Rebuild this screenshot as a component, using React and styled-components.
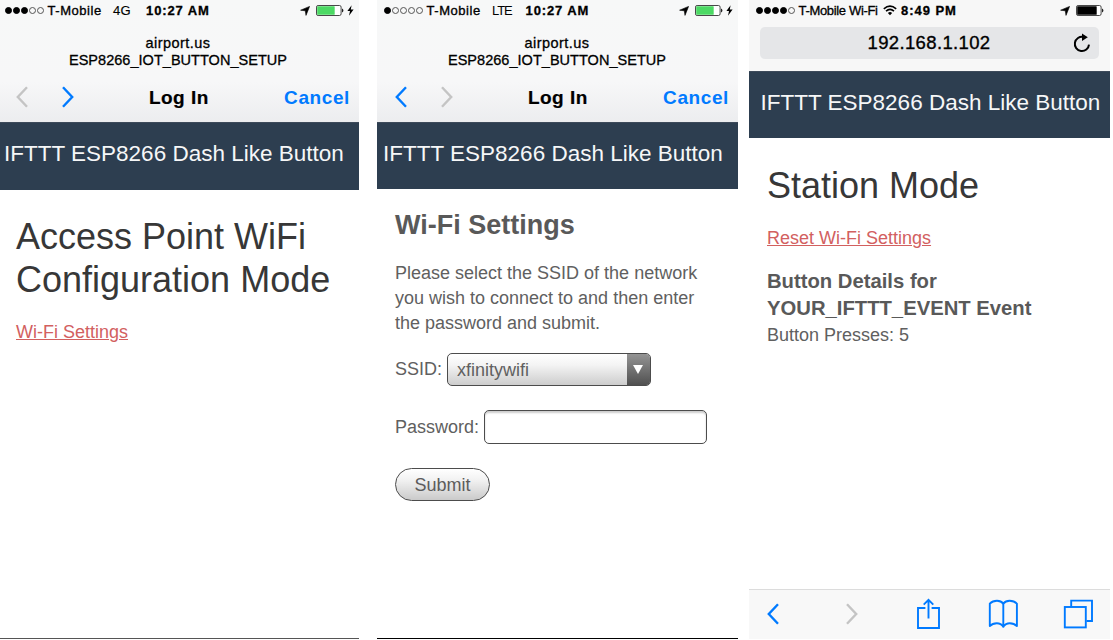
import React from "react";
import styled, { createGlobalStyle } from "styled-components";

const BLUE = "#007aff";
const GREY = "#c4c4c4";

const GlobalStyle = createGlobalStyle`
  * { box-sizing: border-box; }
  body { margin: 0; background: #fff; font-family: "Liberation Sans", Arial, sans-serif; overflow: hidden; }
  h1, h2, h3, p { margin: 0; }
  svg { display: block; flex: none; }
`;

const Board = styled.main`
  display: grid;
  grid-template-columns: 359px 361px 361px;
  column-gap: 18px;
  width: 1113px;
  height: 640px;
  padding-bottom: 1px;
  & > :last-child { margin-left: -7px; }
`;

const Phone = styled.section`
  display: flex;
  flex-direction: column;
  width: ${(p) => p.$width}px;
  height: 639px;
  background: #fff;
  border-bottom: ${(p) => (p.$edge ? `1px solid ${p.$edge}` : "none")};
`;

const Chrome = styled.header`
  height: ${(p) => p.$height}px;
  flex: none;
  background: ${(p) =>
    p.$flat ? "#f7f7f7" : "linear-gradient(#f7f8f8 0, #f7f7f8 82px, #ecedef 122px)"};
`;

const StatusBar = styled.div`
  display: flex;
  align-items: center;
  height: 21px;
  padding: 0 ${(p) => p.$right}px 0 ${(p) => p.$left}px;
`;

const Signal = styled.div`
  display: flex;
  gap: 1px;
  margin-right: 3.5px;
`;

const Dot = styled.i`
  width: 7px;
  height: 7px;
  border-radius: 50%;
  border: 1px solid ${(p) => (p.$on ? "#000" : "#555")};
  background: ${(p) => (p.$on ? "#000" : "transparent")};
`;

const StatusText = styled.span`
  font-size: 13px;
  line-height: 21px;
  color: #000;
  white-space: nowrap;
  width: ${(p) => p.$width}px;
  flex: none;
  font-weight: ${(p) => (p.$bold ? 700 : 400)};
  letter-spacing: ${(p) => p.$spacing || 0}px;
  -webkit-text-stroke: ${(p) => p.$stroke || 0}px currentColor;
`;

const StatusIcons = styled.div`
  display: flex;
  align-items: center;
  margin-left: auto;
  & > :first-child { margin-right: 6px; }
  & > :nth-child(3) { margin-left: 3px; }
`;

const WifiSlot = styled.span`
  margin-right: 4px;
`;

const Network = styled.div`
  padding: 14px ${(p) => p.$shift}px 0 0;
  text-align: center;
  font-size: 14.5px;
  line-height: 17px;
  color: #000;
  -webkit-text-stroke: 0.3px #000;
`;

const Host = styled.div`
  letter-spacing: 0.45px;
`;

const NetworkName = styled.div`
  letter-spacing: 0.03px;
`;

const LoginBar = styled.div`
  display: grid;
  grid-template-columns: 133px 1fr auto;
  align-items: center;
  height: 34px;
  margin-top: 12px;
  padding: 0 9.5px 0 ${(p) => p.$left}px;
  font-size: 19px;
  font-weight: 700;
  letter-spacing: 0.45px;
`;

const Arrows = styled.div`
  display: flex;
  gap: 34px;
  padding-bottom: 2px;
`;

const LoginTitle = styled.span`
  color: #000;
  -webkit-text-stroke: 0.2px #000;
`;

const Cancel = styled.span`
  color: ${BLUE};
  letter-spacing: 0.6px;
  margin-right: -0.5px;
`;

const AddressBar = styled.div`
  display: grid;
  grid-template-columns: 1fr auto 1fr;
  align-items: center;
  height: 32px;
  margin: 6px 11px 0;
  padding-right: 8px;
  border-radius: 5px;
  background: #e5e6e8;
`;

const Address = styled.span`
  grid-column: 2;
  padding-left: 7px;
  font-size: 18.5px;
  letter-spacing: 0.35px;
  color: #000;
  -webkit-text-stroke: 0.35px #000;
`;

const Reload = styled.span`
  justify-self: end;
`;

const Banner = styled.div`
  flex: none;
  height: ${(p) => p.$height}px;
  padding: ${(p) => p.$top}px 0 0 ${(p) => p.$left}px;
  background: #2d3e50;
  border-top: 1px solid #3d4a5a;
  color: #f6f7f8;
  font-size: 22.5px;
  line-height: 26px;
  white-space: nowrap;
`;

const Page = styled.div`
  flex: 1;
  padding: ${(p) => p.$top}px 16px 0 ${(p) => p.$left}px;
  color: #606060;
  font-size: 18px;
  line-height: 25px;
`;

const Heading = styled.h1`
  color: #373737;
  font-size: 36px;
  font-weight: 400;
  line-height: 43px;
`;

const SettingsTitle = styled.h2`
  font-size: 27px;
  line-height: 32px;
  color: #595959;
`;

const Details = styled.h3`
  margin-top: 17px;
  font-size: 20.25px;
  line-height: 27px;
  color: #595959;
`;

const Presses = styled.p`
  padding-top: 1px;
`;

const PageLink = styled.a`
  display: block;
  width: max-content;
  margin-top: ${(p) => p.$gap}px;
  color: #d2605f;
  text-decoration: underline;
  text-decoration-thickness: 1px;
`;

const Copy = styled.p`
  margin-top: 20px;
  white-space: pre-line;
`;

const Field = styled.label`
  display: flex;
  align-items: center;
  gap: 5px;
  margin-top: ${(p) => p.$top}px;
`;

const Select = styled.div`
  display: flex;
  width: 204px;
  height: 33px;
  border: 1px solid #4c4c4c;
  border-radius: 5px;
  overflow: hidden;
  background: linear-gradient(#fff, #f4f4f4 35%, #cdcdcd);
`;

const SelectValue = styled.span`
  flex: 1;
  padding-left: 9px;
  line-height: 33px;
`;

const SelectArrow = styled.span`
  display: flex;
  align-items: center;
  justify-content: center;
  width: 23px;
  padding: 0 1px 1px 0;
  background: linear-gradient(#949494, #505050);
`;

const Input = styled.input`
  width: 223px;
  height: 34px;
  border: 1px solid #4c4c4c;
  border-radius: 5px;
  background: #fff;
  box-shadow: inset 0 2px 2px rgba(0, 0, 0, 0.2);
  outline: none;
`;

const Submit = styled.button`
  display: block;
  width: 95px;
  height: 33px;
  margin-top: 24px;
  padding: 1px 0 0;
  border: 1px solid #4c4c4c;
  border-radius: 17px;
  background: linear-gradient(#fff, #f2f2f2 35%, #cacaca);
  color: #5c5c5c;
  font: 18px "Liberation Sans", Arial, sans-serif;
`;

const Toolbar = styled.nav`
  display: grid;
  grid-template-columns: 79px 70px 72px 75px auto;
  align-items: center;
  height: 50px;
  padding: 0 0 2px 18px;
  border-top: 1px solid #dcdcdc;
  background: #f8f8f8;
`;

const Chevron = ({ right, color, w = 12, h = 22, s = 2.4 }) => (
  <svg width={w} height={h} viewBox={`0 0 ${w} ${h}`} fill="none" stroke={color} strokeWidth={s}>
    <path d={right ? `M1 1.2 L${w - 1.8} ${h / 2} L1 ${h - 1.2}` : `M${w - 1} 1.2 L1.8 ${h / 2} L${w - 1} ${h - 1.2}`} />
  </svg>
);

const Location = () => (
  <svg width="10" height="10" viewBox="0 0 10 10">
    <path d="M9.6 0.4 L6 9.4 L5.3 4.8 L0.6 4.2 Z" fill="#000" stroke="#000" strokeWidth="0.6" />
  </svg>
);

const Battery = ({ level, color }) => (
  <svg width="28" height="11" viewBox="0 0 28 11">
    <rect x="0.5" y="0.5" width="24.6" height="10" rx="1.6" fill="#fff" stroke="#333" strokeWidth="0.9" />
    <rect x="1.2" y="1.2" width={level} height="8.6" rx="0.6" fill={color} />
    <path d="M26 3.6 Q27.4 4 27.4 5.5 Q27.4 7 26 7.4 Z" fill="#222" />
  </svg>
);

const Bolt = () => (
  <svg width="7" height="11" viewBox="0 0 7 11">
    <path d="M4.6 0.3 L0.4 6 H3 L2 10.7 L6.6 4.6 H3.8 Z" fill="#000" />
  </svg>
);

const Wifi = () => (
  <svg width="14" height="11" viewBox="0 0 14 11" fill="none" stroke="#000" strokeWidth="1.6">
    <path d="M0.8 3.9 Q7 -1.5 13.2 3.9" />
    <path d="M3 6.2 Q7 2.7 11 6.2" />
    <path d="M7 10.2 L4.9 8 Q7 6.2 9.1 8 Z" fill="#000" stroke="none" />
  </svg>
);

const ReloadIcon = () => (
  <svg width="18" height="20" viewBox="0 0 18 20" fill="none" stroke="#000" strokeWidth="2">
    <path d="M10.5 4 A7.1 7.1 0 1 0 16 11.6" />
    <path d="M9 0.4 L14.8 4.2 L9 8 Z" fill="#000" stroke="none" />
  </svg>
);

const Share = () => (
  <svg width="24" height="32" viewBox="0 0 24 32" fill="none" stroke={BLUE} strokeWidth="1.9">
    <path d="M9.4 10 H2 V30 H23 V10 H15.6" />
    <path d="M12.5 20.5 V2.2 M7.7 6.6 L12.5 1.9 L17.3 6.6" />
  </svg>
);

const Book = () => (
  <svg width="30" height="30" viewBox="0 0 30 30" fill="none" stroke={BLUE} strokeWidth="1.9" strokeLinejoin="round">
    <path d="M15.3 4.7 Q13 1.8 9 1.8 Q4.5 1.8 1.8 4.7 V27 Q4.5 24.2 8.8 24.2 Q13 24.2 15.3 27.5 Q17.6 24.2 21.8 24.2 Q26.1 24.2 28.9 27 V4.7 Q26.1 1.8 21.6 1.8 Q17.6 1.8 15.3 4.7 Z" />
    <path d="M15.3 4.7 V28.5" />
  </svg>
);

const Tabs = () => (
  <svg width="30" height="30" viewBox="0 0 30 30" fill="none" stroke={BLUE} strokeWidth="1.9">
    <rect x="1.8" y="8" width="21" height="20.4" />
    <path d="M8.2 7.5 V1.6 H29 V22 H23.5" />
  </svg>
);

const SignalDots = ({ on }) => (
  <Signal>
    {[1, 2, 3, 4, 5].map((n) => (
      <Dot key={n} $on={n <= on} />
    ))}
  </Signal>
);

const LoginChrome = ({ signal, network, left, backActive }) => (
  <Chrome $height={122}>
    <StatusBar $left={left} $right={5}>
      <SignalDots on={signal} />
      <StatusText $width={65.5} $spacing={0.55} $stroke={0.35}>T-Mobile</StatusText>
      {network === "4G" ? (
        <StatusText $width={33} $spacing={0.3} $stroke={0.15}>4G</StatusText>
      ) : (
        <StatusText $width={33.5} $spacing={-1.1}>LTE</StatusText>
      )}
      <StatusText $width={68} $bold $spacing={0.9} $stroke={0.3}>10:27 AM</StatusText>
      <StatusIcons>
        <Location />
        <Battery level={17.5} color="#4cd964" />
        <Bolt />
      </StatusIcons>
    </StatusBar>
    <Network $shift={backActive ? 1 : 3}>
      <Host>airport.us</Host>
      <NetworkName>ESP8266_IOT_BUTTON_SETUP</NetworkName>
    </Network>
    <LoginBar $left={backActive ? 18 : 16}>
      <Arrows>
        <Chevron color={backActive ? BLUE : GREY} />
        <Chevron right color={backActive ? GREY : BLUE} />
      </Arrows>
      <LoginTitle>Log In</LoginTitle>
      <Cancel>Cancel</Cancel>
    </LoginBar>
  </Chrome>
);

export default function App() {
  const title = "IFTTT ESP8266 Dash Like Button";
  return (
    <>
      <GlobalStyle />
      <Board>
        <Phone $width={359} $edge="#555">
          <LoginChrome signal={3} network="4G" left={5} />
          <Banner $height={68} $top={18} $left={4}>{title}</Banner>
          <Page $top={25} $left={16}>
            <Heading>Access Point WiFi<br />Configuration Mode</Heading>
            <PageLink $gap={19}>Wi-Fi Settings</PageLink>
          </Page>
        </Phone>
        <Phone $width={361} $edge="#000">
          <LoginChrome signal={1} network="LTE" left={7} backActive />
          <Banner $height={67} $top={18} $left={6}>{title}</Banner>
          <Page $top={20} $left={18}>
            <SettingsTitle>Wi-Fi Settings</SettingsTitle>
            <Copy>{"Please select the SSID of the network\nyou wish to connect to and then enter\nthe password and submit."}</Copy>
            <Field $top={17}>
              SSID:
              <Select>
                <SelectValue>xfinitywifi</SelectValue>
                <SelectArrow>
                  <svg width="10" height="9" viewBox="0 0 10 9"><path d="M0 0 H10 L5 9 Z" fill="#fff" /></svg>
                </SelectArrow>
              </Select>
            </Field>
            <Field $top={24}>
              Password:
              <Input type="password" />
            </Field>
            <Submit>Submit</Submit>
          </Page>
        </Phone>
        <Phone $width={361}>
          <Chrome $height={71} $flat>
            <StatusBar $left={7} $right={6}>
              <SignalDots on={4} />
              <StatusText $width={84.5} $spacing={-0.33} $stroke={0.3}>T-Mobile Wi-Fi</StatusText>
              <WifiSlot><Wifi /></WifiSlot>
              <StatusText $width={62} $bold $spacing={0.95} $stroke={0.3}>8:49 PM</StatusText>
              <StatusIcons>
                <Location />
                <Battery level={19.5} color="#000" />
              </StatusIcons>
            </StatusBar>
            <AddressBar>
              <Address>192.168.1.102</Address>
              <Reload><ReloadIcon /></Reload>
            </AddressBar>
          </Chrome>
          <Banner $height={67} $top={18} $left={11.5}>{title}</Banner>
          <Page $top={26} $left={18}>
            <Heading>Station Mode</Heading>
            <PageLink $gap={19}>Reset Wi-Fi Settings</PageLink>
            <Details>Button Details for<br />YOUR_IFTTT_EVENT Event</Details>
            <Presses>Button Presses: 5</Presses>
          </Page>
          <Toolbar>
            <Chevron color={BLUE} />
            <Chevron right color={GREY} />
            <Share />
            <Book />
            <Tabs />
          </Toolbar>
        </Phone>
      </Board>
    </>
  );
}
